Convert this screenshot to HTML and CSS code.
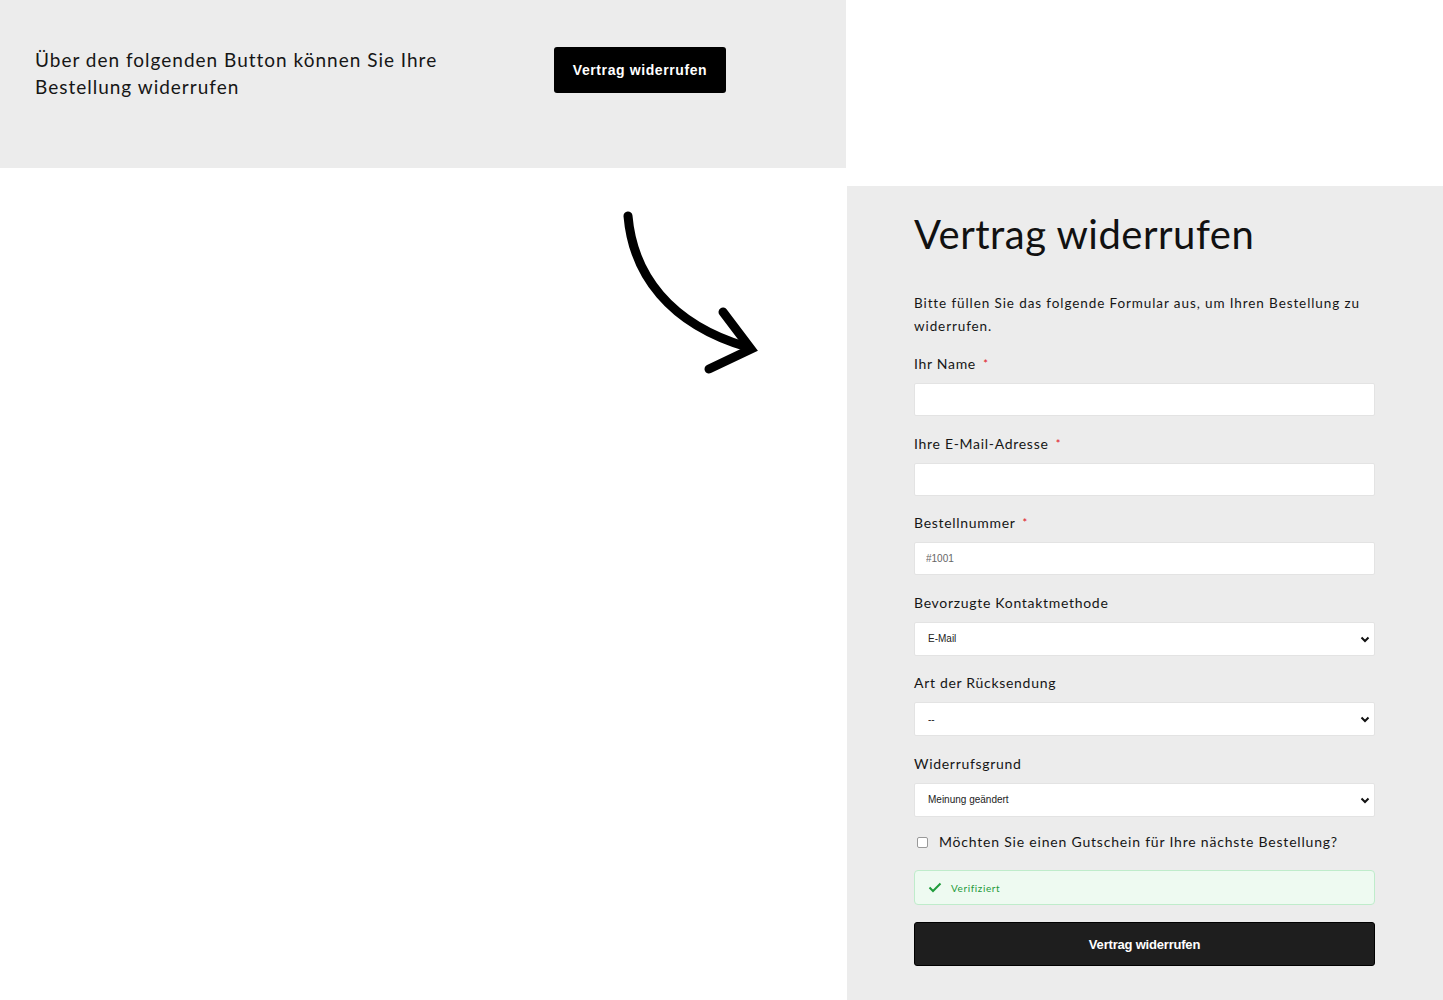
FILE: index.html
```html
<!DOCTYPE html>
<html lang="de">
<head>
  <meta charset="UTF-8">
  <title>Vertrag widerrufen</title>
  <link rel="stylesheet" href="styles.css">
</head>
<body>
  <!-- Hinweis mit Button -->
  <div class="top-panel">
    <div class="top-text">Über den folgenden Button können Sie Ihre Bestellung widerrufen</div>
    <button class="btn-top">Vertrag widerrufen</button>
  </div>

  <div class="lower">
    <div class="arrow-col">
      <svg class="arrow" width="150" height="180" viewBox="0 0 150 180">
        <path d="M9 12 C 14 70, 50 120, 128 143" fill="none" stroke="#000" stroke-width="9" stroke-linecap="round"/>
        <path d="M104 108 L 132 145 L 90 165" fill="none" stroke="#000" stroke-width="9" stroke-linecap="round" stroke-linejoin="miter"/>
      </svg>
    </div>

    <!-- Formular -->
    <div class="form-panel">
      <h1 class="form-title">Vertrag widerrufen</h1>
      <p class="form-intro">Bitte füllen Sie das folgende Formular aus, um Ihren Bestellung zu widerrufen.</p>

      <div class="field">
        <label class="field-label">Ihr Name <span class="req">*</span></label>
        <input class="field-input" type="text">
      </div>
      <div class="field">
        <label class="field-label">Ihre E-Mail-Adresse <span class="req">*</span></label>
        <input class="field-input" type="text">
      </div>
      <div class="field">
        <label class="field-label">Bestellnummer <span class="req">*</span></label>
        <input class="field-input" type="text" placeholder="#1001">
      </div>
      <div class="field">
        <label class="field-label">Bevorzugte Kontaktmethode</label>
        <div class="select-wrap">
          <select class="field-select"><option>E-Mail</option></select>
          <svg class="chevron" width="10" height="7" viewBox="0 0 10 7"><path d="M1.5 1.5 L5 5 L8.5 1.5" fill="none" stroke="#111" stroke-width="2"/></svg>
        </div>
      </div>
      <div class="field">
        <label class="field-label">Art der Rücksendung</label>
        <div class="select-wrap">
          <select class="field-select"><option>--</option></select>
          <svg class="chevron" width="10" height="7" viewBox="0 0 10 7"><path d="M1.5 1.5 L5 5 L8.5 1.5" fill="none" stroke="#111" stroke-width="2"/></svg>
        </div>
      </div>
      <div class="field">
        <label class="field-label">Widerrufsgrund</label>
        <div class="select-wrap">
          <select class="field-select"><option>Meinung geändert</option></select>
          <svg class="chevron" width="10" height="7" viewBox="0 0 10 7"><path d="M1.5 1.5 L5 5 L8.5 1.5" fill="none" stroke="#111" stroke-width="2"/></svg>
        </div>
      </div>

      <label class="check-row">
        <span class="check-box"></span>
        Möchten Sie einen Gutschein für Ihre nächste Bestellung?
      </label>

      <div class="verified">
        <svg width="14" height="11" viewBox="0 0 14 11"><path d="M1.5 5.5 L5 9 L12.5 1.5" fill="none" stroke="#1f9b3b" stroke-width="2"/></svg>
        <span>Verifiziert</span>
      </div>

      <button class="btn-submit">Vertrag widerrufen</button>
    </div>
  </div>
</body>
</html>
```

FILE: styles.css
```css
body {
  margin: 0;
  font-family: Lato, "Open Sans", sans-serif;
  background: #fff;
  color: #161616;
}
.top-panel {
  width: 846px;
  height: 168px;
  box-sizing: border-box;
  background: #ececec;
  padding: 46px 0 0 35px;
  display: flex;
  align-items: flex-start;
  gap: 39px;
}
.top-text {
  flex: 0 0 480px;
  font-size: 19px;
  line-height: 27px;
  letter-spacing: 1px;
}
.btn-top {
  margin-top: 1px;
  width: 172px;
  height: 46px;
  background: #000;
  color: #fff;
  border: none;
  border-radius: 3px;
  font-family: "Liberation Sans", Arial, sans-serif;
  font-weight: bold;
  font-size: 14px;
  letter-spacing: 0.6px;
}
.lower {
  display: flex;
  align-items: flex-start;
}
.arrow-col {
  width: 847px;
  padding: 36px 0 0 619px;
  box-sizing: border-box;
}
.arrow {
  display: block;
}
.form-panel {
  width: 596px;
  margin-top: 18px;
  box-sizing: border-box;
  background: #ececec;
  padding: 23px 68px 40px 67px;
}
.form-title {
  margin: 0;
  font-weight: normal;
  font-size: 40px;
  line-height: 50px;
  letter-spacing: 0.5px;
  color: #111;
}
.form-intro {
  margin: 33px 0 0 0;
  font-size: 13.5px;
  line-height: 23px;
  letter-spacing: 0.9px;
}
.field {
  margin-top: 16px;
  display: flex;
  flex-direction: column;
}
.field + .field {
  margin-top: 17.5px;
}
.field-label {
  display: block;
  height: 20px;
  font-size: 14px;
  line-height: 20px;
  letter-spacing: 0.7px;
  margin-bottom: 9px;
}
.req {
  color: #e0101a;
  font-size: 11px;
  line-height: 0;
  vertical-align: 1px;
  margin-left: 3px;
}
.field-input,
.field-select {
  height: 33px;
  box-sizing: border-box;
  width: 100%;
  background: #fff;
  border: 1px solid #e3e3e3;
  border-radius: 2px;
  padding: 0 11px;
  font-family: "Liberation Sans", Arial, sans-serif;
  font-size: 10px;
  color: #222;
  outline: none;
}
.field-input::placeholder {
  color: #666;
}
.select-wrap {
  position: relative;
  height: 34px;
}
.field-select {
  height: 34px;
  appearance: none;
  -webkit-appearance: none;
  padding-left: 13px;
  display: block;
}
.chevron {
  position: absolute;
  right: 5px;
  top: 14px;
}
.check-row {
  margin-top: 15.5px;
  display: flex;
  align-items: center;
  font-size: 14px;
  line-height: 20px;
  letter-spacing: 0.8px;
}
.check-box {
  width: 9px;
  height: 9px;
  border: 1px solid #999;
  border-radius: 2px;
  background: #fff;
  margin: 0 11px 0 3px;
}
.verified {
  margin-top: 18px;
  height: 35px;
  box-sizing: border-box;
  background: #eefaf1;
  border: 1px solid #bfeccb;
  border-radius: 4px;
  display: flex;
  align-items: center;
  gap: 9px;
  padding-left: 13px;
  color: #1f9b3b;
  font-size: 10px;
  letter-spacing: 0.6px;
}
.btn-submit {
  margin-top: 17px;
  display: block;
  width: 100%;
  height: 44px;
  background: #1e1e1e;
  color: #fff;
  border: 1px solid #000;
  border-radius: 3px;
  font-family: "Liberation Sans", Arial, sans-serif;
  font-weight: bold;
  font-size: 13px;
  letter-spacing: -0.2px;
}
```
